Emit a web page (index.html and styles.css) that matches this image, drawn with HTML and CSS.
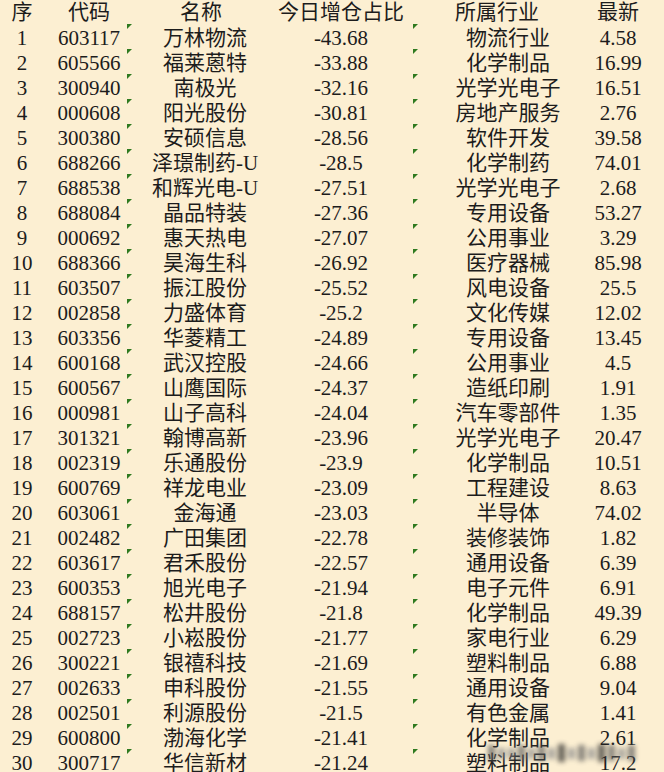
FILE: index.html
```html
<!DOCTYPE html>
<html lang="zh">
<head>
<meta charset="utf-8">
<title>今日增仓占比</title>
<link rel="stylesheet" href="styles.css">
</head>
<body>
<div class="sheet">
  <div class="row head">
    <div class="c">序</div>
    <div class="c">代码</div>
    <div class="c h-name">名称</div>
    <div class="c">今日增仓占比</div>
    <div class="c gap"></div>
    <div class="c h-ind">所属行业</div>
    <div class="c">最新</div>
  </div>
  <div class="row"><div class="c">1</div><div class="c">603117</div><div class="c">万林物流</div><div class="c">-43.68</div><div class="c gap"></div><div class="c">物流行业</div><div class="c">4.58</div></div>
  <div class="row"><div class="c">2</div><div class="c">605566</div><div class="c">福莱蒽特</div><div class="c">-33.88</div><div class="c gap"></div><div class="c">化学制品</div><div class="c">16.99</div></div>
  <div class="row"><div class="c">3</div><div class="c">300940</div><div class="c">南极光</div><div class="c">-32.16</div><div class="c gap"></div><div class="c">光学光电子</div><div class="c">16.51</div></div>
  <div class="row"><div class="c">4</div><div class="c">000608</div><div class="c">阳光股份</div><div class="c">-30.81</div><div class="c gap"></div><div class="c">房地产服务</div><div class="c">2.76</div></div>
  <div class="row"><div class="c">5</div><div class="c">300380</div><div class="c">安硕信息</div><div class="c">-28.56</div><div class="c gap"></div><div class="c">软件开发</div><div class="c">39.58</div></div>
  <div class="row"><div class="c">6</div><div class="c">688266</div><div class="c">泽璟制药-U</div><div class="c">-28.5</div><div class="c gap"></div><div class="c">化学制药</div><div class="c">74.01</div></div>
  <div class="row"><div class="c">7</div><div class="c">688538</div><div class="c">和辉光电-U</div><div class="c">-27.51</div><div class="c gap"></div><div class="c">光学光电子</div><div class="c">2.68</div></div>
  <div class="row"><div class="c">8</div><div class="c">688084</div><div class="c">晶品特装</div><div class="c">-27.36</div><div class="c gap"></div><div class="c">专用设备</div><div class="c">53.27</div></div>
  <div class="row"><div class="c">9</div><div class="c">000692</div><div class="c">惠天热电</div><div class="c">-27.07</div><div class="c gap"></div><div class="c">公用事业</div><div class="c">3.29</div></div>
  <div class="row"><div class="c">10</div><div class="c">688366</div><div class="c">昊海生科</div><div class="c">-26.92</div><div class="c gap"></div><div class="c">医疗器械</div><div class="c">85.98</div></div>
  <div class="row"><div class="c">11</div><div class="c">603507</div><div class="c">振江股份</div><div class="c">-25.52</div><div class="c gap"></div><div class="c">风电设备</div><div class="c">25.5</div></div>
  <div class="row"><div class="c">12</div><div class="c">002858</div><div class="c">力盛体育</div><div class="c">-25.2</div><div class="c gap"></div><div class="c">文化传媒</div><div class="c">12.02</div></div>
  <div class="row"><div class="c">13</div><div class="c">603356</div><div class="c">华菱精工</div><div class="c">-24.89</div><div class="c gap"></div><div class="c">专用设备</div><div class="c">13.45</div></div>
  <div class="row"><div class="c">14</div><div class="c">600168</div><div class="c">武汉控股</div><div class="c">-24.66</div><div class="c gap"></div><div class="c">公用事业</div><div class="c">4.5</div></div>
  <div class="row"><div class="c">15</div><div class="c">600567</div><div class="c">山鹰国际</div><div class="c">-24.37</div><div class="c gap"></div><div class="c">造纸印刷</div><div class="c">1.91</div></div>
  <div class="row"><div class="c">16</div><div class="c">000981</div><div class="c">山子高科</div><div class="c">-24.04</div><div class="c gap"></div><div class="c">汽车零部件</div><div class="c">1.35</div></div>
  <div class="row"><div class="c">17</div><div class="c">301321</div><div class="c">翰博高新</div><div class="c">-23.96</div><div class="c gap"></div><div class="c">光学光电子</div><div class="c">20.47</div></div>
  <div class="row"><div class="c">18</div><div class="c">002319</div><div class="c">乐通股份</div><div class="c">-23.9</div><div class="c gap"></div><div class="c">化学制品</div><div class="c">10.51</div></div>
  <div class="row"><div class="c">19</div><div class="c">600769</div><div class="c">祥龙电业</div><div class="c">-23.09</div><div class="c gap"></div><div class="c">工程建设</div><div class="c">8.63</div></div>
  <div class="row"><div class="c">20</div><div class="c">603061</div><div class="c">金海通</div><div class="c">-23.03</div><div class="c gap"></div><div class="c">半导体</div><div class="c">74.02</div></div>
  <div class="row"><div class="c">21</div><div class="c">002482</div><div class="c">广田集团</div><div class="c">-22.78</div><div class="c gap"></div><div class="c">装修装饰</div><div class="c">1.82</div></div>
  <div class="row"><div class="c">22</div><div class="c">603617</div><div class="c">君禾股份</div><div class="c">-22.57</div><div class="c gap"></div><div class="c">通用设备</div><div class="c">6.39</div></div>
  <div class="row"><div class="c">23</div><div class="c">600353</div><div class="c">旭光电子</div><div class="c">-21.94</div><div class="c gap"></div><div class="c">电子元件</div><div class="c">6.91</div></div>
  <div class="row"><div class="c">24</div><div class="c">688157</div><div class="c">松井股份</div><div class="c">-21.8</div><div class="c gap"></div><div class="c">化学制品</div><div class="c">49.39</div></div>
  <div class="row"><div class="c">25</div><div class="c">002723</div><div class="c">小崧股份</div><div class="c">-21.77</div><div class="c gap"></div><div class="c">家电行业</div><div class="c">6.29</div></div>
  <div class="row"><div class="c">26</div><div class="c">300221</div><div class="c">银禧科技</div><div class="c">-21.69</div><div class="c gap"></div><div class="c">塑料制品</div><div class="c">6.88</div></div>
  <div class="row"><div class="c">27</div><div class="c">002633</div><div class="c">申科股份</div><div class="c">-21.55</div><div class="c gap"></div><div class="c">通用设备</div><div class="c">9.04</div></div>
  <div class="row"><div class="c">28</div><div class="c">002501</div><div class="c">利源股份</div><div class="c">-21.5</div><div class="c gap"></div><div class="c">有色金属</div><div class="c">1.41</div></div>
  <div class="row"><div class="c">29</div><div class="c">600800</div><div class="c">渤海化学</div><div class="c">-21.41</div><div class="c gap"></div><div class="c">化学制品</div><div class="c">2.61</div></div>
  <div class="row"><div class="c">30</div><div class="c">300717</div><div class="c">华信新材</div><div class="c">-21.24</div><div class="c gap"></div><div class="c">塑料制品</div><div class="c">17.2</div></div>
  <div class="watermark" aria-hidden="true">
    <span class="wm-a"></span><span class="wm-b"></span><span class="wm-b"></span><span class="wm-a"></span><span class="wm-b"></span><span class="wm-a"></span><span class="wm-b"></span><span class="wm-c"></span><span class="wm-b"></span><span class="wm-a"></span><span class="wm-b"></span><span class="wm-c"></span><span class="wm-a"></span><span class="wm-b"></span><span class="wm-a"></span>
  </div>
</div>
</body>
</html>
```
FILE: styles.css
```css
html, body {
  margin: 0;
  padding: 0;
  background: #fcefd2;
}
body {
  width: 664px;
  height: 772px;
  overflow: hidden;
  font-family: "Liberation Serif", "Noto Sans CJK SC", serif;
  font-size: 21px;
  color: #1c1c1c;
}
.sheet {
  position: relative;
  display: flex;
  flex-direction: column;
}
.row {
  position: relative;
  display: grid;
  grid-template-columns: 44px 90px 142px 130px 22px 160px 60px;
  height: 25px;
  line-height: 25px;
}
.c {
  display: flex;
  justify-content: center;
  white-space: nowrap;
  padding-top: 1px;
}
.head .c {
  padding-top: 0;
}
.head .h-name {
  padding-right: 8px;
}
.head .h-ind {
  padding-right: 22px;
}
.row:not(.head)::before,
.row:not(.head)::after {
  content: "";
  position: absolute;
  top: -1px;
  width: 0;
  height: 0;
  border-top: 5px solid #2f7a1f;
  border-right: 5px solid transparent;
}
.row:not(.head)::before {
  left: 127px;
}
.row:not(.head)::after {
  left: 413px;
}
.watermark {
  position: absolute;
  left: 488px;
  top: 742px;
  display: flex;
  align-items: center;
  gap: 3px;
  height: 22px;
  filter: blur(2.5px);
  opacity: 0.7;
}
.watermark span {
  display: block;
  width: 7px;
  background: #5a5a5a;
}
.watermark .wm-a {
  height: 16px;
}
.watermark .wm-b {
  height: 11px;
  background: #8a8a8a;
}
.watermark .wm-c {
  height: 18px;
  background: #2a2a2a;
}
```
